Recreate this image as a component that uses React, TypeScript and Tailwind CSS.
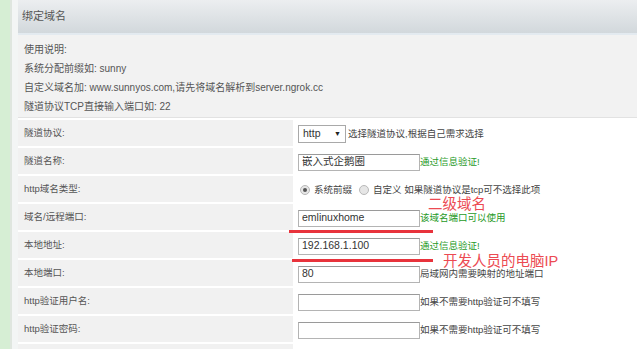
import React from "react";

const font = "font-['Liberation_Sans','Noto_Sans_CJK_SC',sans-serif]";

type Row = { label: string; content: React.ReactNode };

const Input = ({ value = "" }: { value?: string }) => (
  <div className="flex h-[17px] w-[122px] shrink-0 items-center border border-[#b4b4b4] border-t-[#9a9a9a] bg-white pl-[3px] text-[10.5px] text-[#333]">
    {value}
  </div>
);

const Ok = ({ text = "通过信息验证!" }: { text?: string }) => (
  <span className="text-[9.5px] text-[#1f9a1f]">{text}</span>
);

const Hint = ({ text }: { text: string }) => (
  <span className="text-[9.5px] text-[#444]">{text}</span>
);

const Radio = ({ checked }: { checked?: boolean }) => (
  <span className="flex h-[10px] w-[10px] items-center justify-center rounded-full border border-[#b9b9b9] bg-[#e6e6e6]">
    {checked && <span className="h-[4px] w-[4px] rounded-full bg-[#555]" />}
  </span>
);

const rows: Row[] = [
  {
    label: "隧道协议:",
    content: (
      <div className="flex items-center gap-[2px]">
        <div className="flex h-[18px] w-[48px] items-center justify-between border border-[#a9a9a9] bg-white px-[4px] text-[10.5px] text-[#333]">
          <span>http</span>
          <span className="text-[7px] text-[#222]">▼</span>
        </div>
        <Hint text="选择隧道协议,根据自己需求选择" />
      </div>
    ),
  },
  {
    label: "隧道名称:",
    content: (
      <div className="flex items-center">
        <Input value="嵌入式企鹅圈" />
        <Ok />
      </div>
    ),
  },
  {
    label: "http域名类型:",
    content: (
      <div className="flex items-center gap-[4px] pl-[2px] text-[9.5px] text-[#444]">
        <Radio checked />
        <span>系统前缀</span>
        <span className="ml-[3px]">
          <Radio />
        </span>
        <span>自定义 如果隧道协议是tcp可不选择此项</span>
      </div>
    ),
  },
  {
    label: "域名/远程端口:",
    content: (
      <div className="flex items-center">
        <Input value="emlinuxhome" />
        <Ok text="该域名端口可以使用" />
      </div>
    ),
  },
  {
    label: "本地地址:",
    content: (
      <div className="flex items-center">
        <Input value="192.168.1.100" />
        <Ok />
      </div>
    ),
  },
  {
    label: "本地端口:",
    content: (
      <div className="flex items-center">
        <Input value="80" />
        <Hint text="局域网内需要映射的地址端口" />
      </div>
    ),
  },
  {
    label: "http验证用户名:",
    content: (
      <div className="flex items-center">
        <Input />
        <Hint text="如果不需要http验证可不填写" />
      </div>
    ),
  },
  {
    label: "http验证密码:",
    content: (
      <div className="flex items-center">
        <Input />
        <Hint text="如果不需要http验证可不填写" />
      </div>
    ),
  },
  { label: "", content: null },
];

const App = () => {
  return (
    <div className={`relative flex h-[349px] w-[637px] overflow-hidden bg-white ${font}`}>
      <div className="w-[10px] shrink-0 bg-[#d6eed4]" />
      <div className="w-[2px] shrink-0 bg-[#dfe6df]" />
      <div className="w-[6px] shrink-0 bg-[#f3f5f5]" />

      <div className="flex min-w-0 flex-1 flex-col">
        <div className="flex h-[33px] shrink-0 items-center bg-gradient-to-b from-[#eceef0] to-[#d2d8dc] pl-[4px] text-[11px] text-[#555]">
          绑定域名
        </div>
        <div className="h-[2px] shrink-0 bg-[#e3eaf0]" />

        <div className="flex h-[83px] shrink-0 flex-col border-b border-[#e2e2e2] bg-[#f2f2f2] pl-[6px] pt-[5px] text-[10px] leading-[19px] text-[#555]">
          <p>使用说明:</p>
          <p>系统分配前缀如: sunny</p>
          <p>自定义域名加: www.sunnyos.com,请先将域名解析到server.ngrok.cc</p>
          <p>隧道协议TCP直接输入端口如: 22</p>
        </div>
        <div className="h-[2px] shrink-0 bg-white" />

        <div className="flex flex-col">
          {rows.map((row, i) => (
            <div key={i} className="flex h-[28px] shrink-0">
              <div className="flex w-[275px] shrink-0 items-center border-b-2 border-white bg-[#f1f1f1] pl-[6px] text-[9.5px] text-[#555]">
                {row.label}
              </div>
              <div className="flex flex-1 items-center bg-white pl-[5px]">{row.content}</div>
            </div>
          ))}
        </div>
      </div>

      {/* red annotations */}
      <div className="absolute left-[289px] top-[230px] h-[3px] w-[144px] bg-[#e8333c]" />
      <div className="absolute left-[292px] top-[259px] h-[3px] w-[141px] bg-[#e8333c]" />
      <span className="absolute left-[428px] top-[197px] text-[14.5px] leading-none text-[#ec4a52]">
        二级域名
      </span>
      <span className="absolute left-[443px] top-[254px] text-[14.5px] leading-none text-[#ec4a52]">
        开发人员的电脑IP
      </span>
    </div>
  );
};

export default App;
